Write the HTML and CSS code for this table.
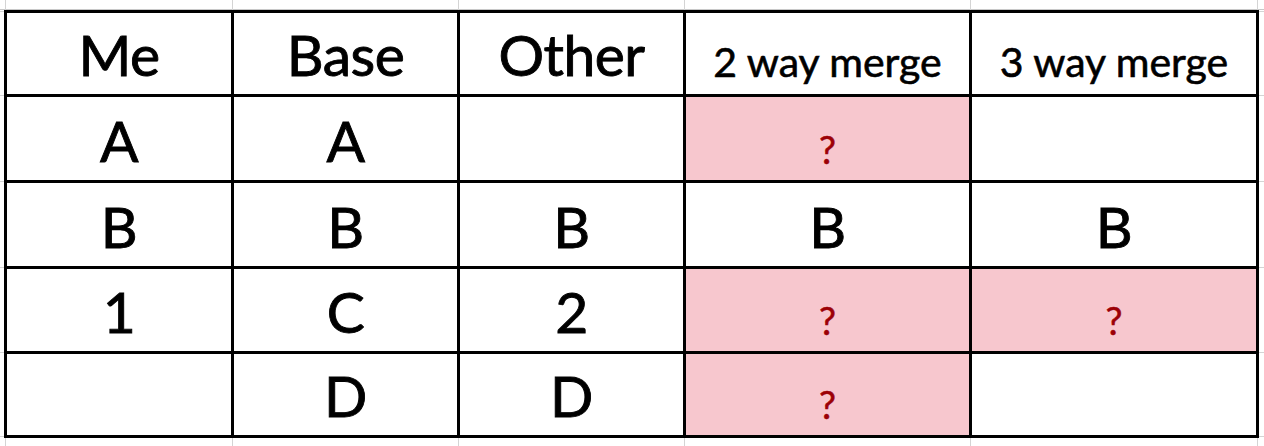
FILE: index.html
```html
<!DOCTYPE html>
<html lang="en">
<head>
<meta charset="utf-8">
<title>Merge table</title>
<link rel="stylesheet" href="styles.css">
</head>
<body>
<div class="sheet">
  <div class="grid">
    <div class="cell big">Me</div>
    <div class="cell big">Base</div>
    <div class="cell big">Other</div>
    <div class="cell mid">2 way merge</div>
    <div class="cell mid">3 way merge</div>

    <div class="cell big">A</div>
    <div class="cell big">A</div>
    <div class="cell big"></div>
    <div class="cell bad">?</div>
    <div class="cell big"></div>

    <div class="cell big">B</div>
    <div class="cell big">B</div>
    <div class="cell big">B</div>
    <div class="cell big">B</div>
    <div class="cell big">B</div>

    <div class="cell big">1</div>
    <div class="cell big">C</div>
    <div class="cell big">2</div>
    <div class="cell bad">?</div>
    <div class="cell bad">?</div>

    <div class="cell big"></div>
    <div class="cell big">D</div>
    <div class="cell big">D</div>
    <div class="cell bad">?</div>
    <div class="cell big"></div>
  </div>
</div>
</body>
</html>
```

FILE: styles.css
```css
html, body {
  margin: 0;
  padding: 0;
  background: #ffffff;
}

.sheet {
  width: 1264px;
  height: 446px;
  overflow: hidden;
  box-sizing: border-box;
  padding: 10px 0 0 4px;
  background-color: #ffffff;
  background-repeat: no-repeat;
  background-image:
    linear-gradient(#d4d4d4, #d4d4d4),
    linear-gradient(#d4d4d4, #d4d4d4),
    linear-gradient(#d4d4d4, #d4d4d4),
    linear-gradient(#d4d4d4, #d4d4d4),
    linear-gradient(#d4d4d4, #d4d4d4),
    linear-gradient(#d4d4d4, #d4d4d4),
    linear-gradient(#d4d4d4, #d4d4d4),
    linear-gradient(#d4d4d4, #d4d4d4),
    linear-gradient(#d4d4d4, #d4d4d4),
    linear-gradient(#d4d4d4, #d4d4d4),
    linear-gradient(#d4d4d4, #d4d4d4),
    linear-gradient(#d4d4d4, #d4d4d4),
    linear-gradient(#c8c8c8, #c8c8c8);
  background-size:
    1px 100%, 1px 100%, 1px 100%, 1px 100%, 1px 100%, 1px 100%,
    100% 1px, 100% 1px, 100% 1px, 100% 1px, 100% 1px, 100% 1px,
    100% 1px;
  background-position:
    5px 0, 232px 0, 458px 0, 684px 0, 970px 0, 1257px 0,
    0 11px, 0 95px, 0 181px, 0 267px, 0 352px, 0 436px,
    0 9px;
  font-family: "Lato", "Liberation Sans", sans-serif;
  color: #000000;
}

.grid {
  display: grid;
  grid-template-columns: 224px 223px 223px 283px 284px;
  grid-template-rows: 81px 83px 83px 82px 81px;
  gap: 3px;
  padding: 3px;
  background: #000000;
  width: max-content;
}

.cell {
  background: #ffffff;
  display: flex;
  align-items: flex-end;
  justify-content: center;
  line-height: 1;
  box-sizing: border-box;
  white-space: nowrap;
}

.big {
  font-size: 57px;
  letter-spacing: -0.5px;
  -webkit-text-stroke: 0.9px #000000;
  padding-bottom: 11px;
}

.mid {
  font-size: 41px;
  -webkit-text-stroke: 0.6px #000000;
  padding-bottom: 12px;
}

.bad {
  background: #f7c7ce;
  color: #9c0006;
  font-size: 38px;
  -webkit-text-stroke: 0.5px #9c0006;
  padding-bottom: 12px;
}
```
